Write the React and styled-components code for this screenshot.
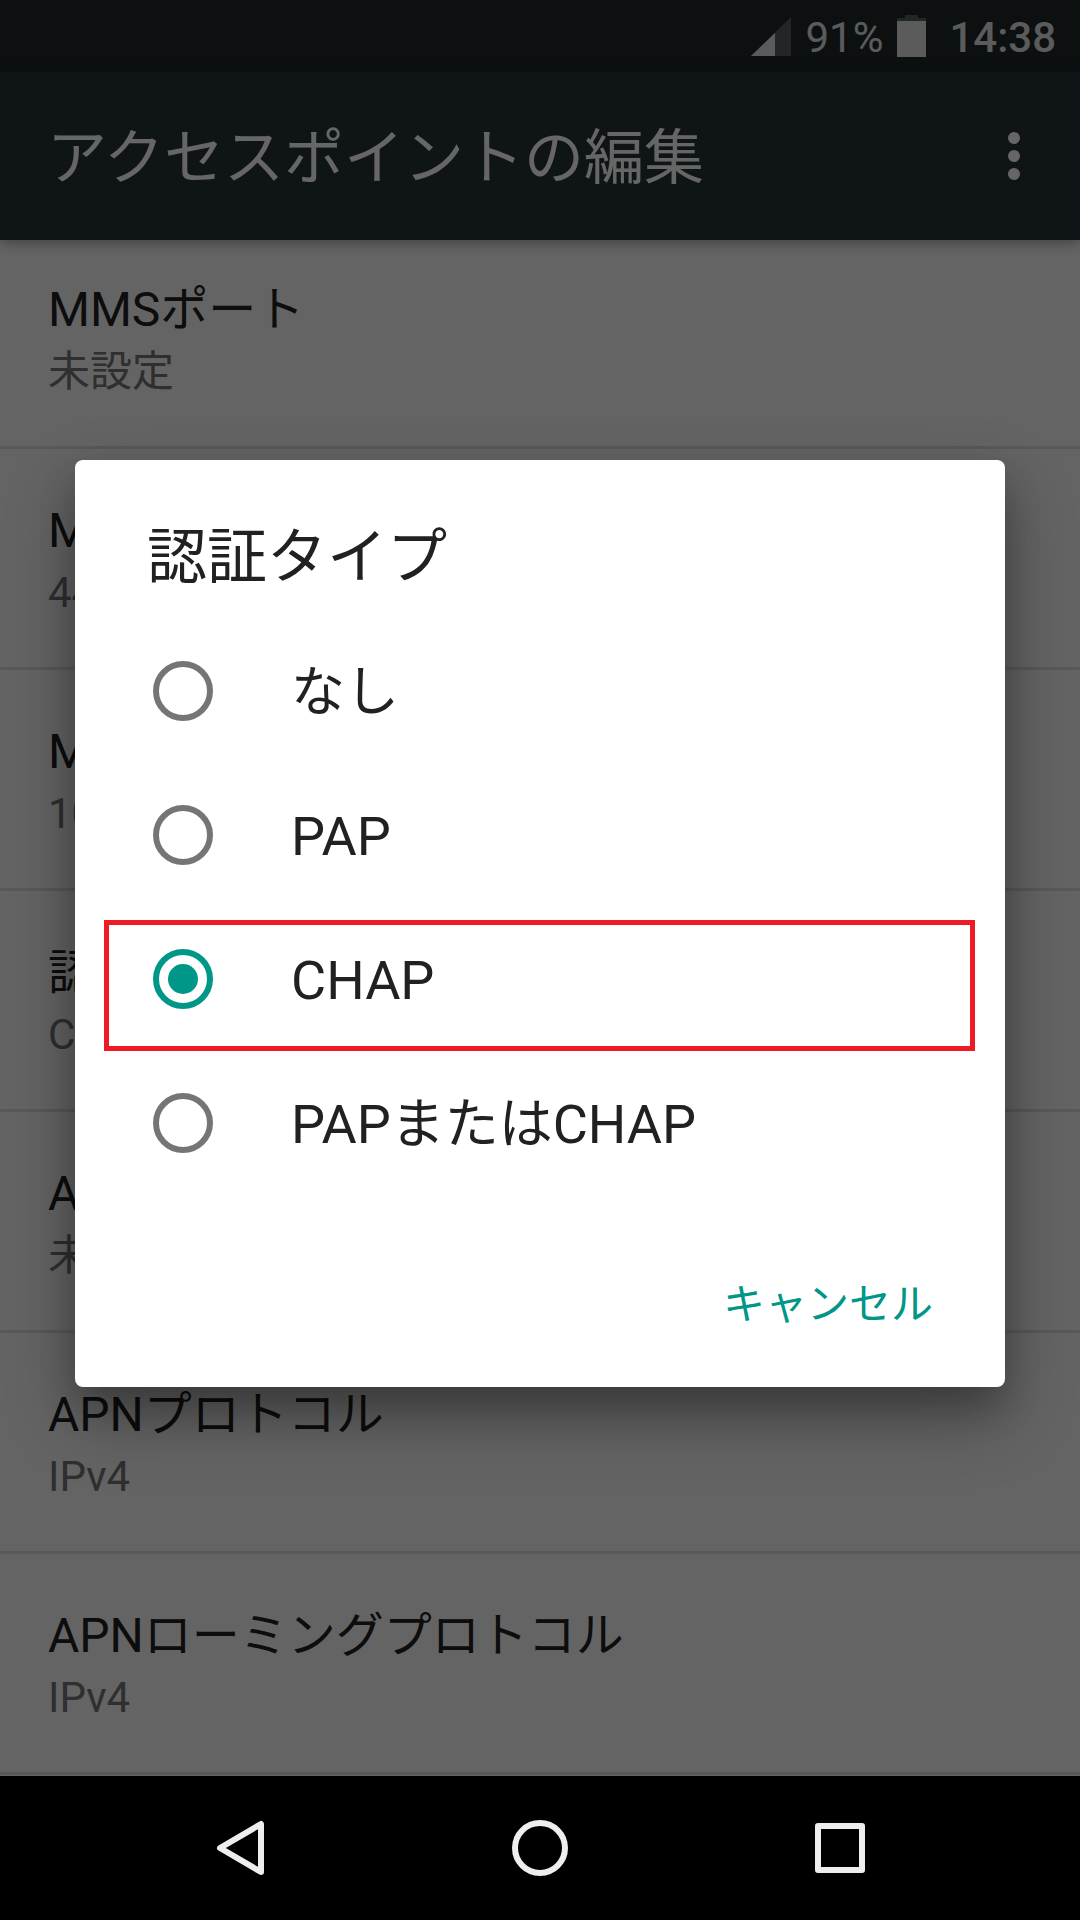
import styled, { createGlobalStyle } from 'styled-components';

const GlobalStyle = createGlobalStyle`
  html, body {
    margin: 0;
    padding: 0;
    background: #000;
  }
  * {
    box-sizing: border-box;
  }
`;

const Screen = styled.div`
  width: 1080px;
  height: 1920px;
  display: flex;
  flex-direction: column;
  overflow: hidden;
  font-family: Roboto, "Noto Sans CJK JP", sans-serif;
`;

const Main = styled.div`
  position: relative;
  height: 1776px;
  display: flex;
  flex-direction: column;
  background: #fafafa;
  overflow: hidden;
`;

const StatusBar = styled.div`
  height: 72px;
  flex: none;
  display: flex;
  align-items: center;
  justify-content: flex-end;
  padding-right: 24px;
  background: #1e282c;
  color: #e4e4e4;
  font-size: 42px;
  line-height: 72px;
`;

const Percent = styled.span`
  margin-left: 14px;
  padding-top: 4px;
`;

const Clock = styled.span`
  margin-left: 23px;
  padding-top: 4px;
  font-weight: 500;
`;

const BatteryIcon = styled.svg`
  margin-left: 14px;
`;

const Toolbar = styled.div`
  height: 168px;
  flex: none;
  display: flex;
  align-items: center;
  justify-content: space-between;
  padding: 0 60px 0 47px;
  background: #263238;
  color: #fff;
  font-size: 60px;
  position: relative;
  z-index: 1;
  box-shadow: 0 4px 12px rgba(0, 0, 0, 0.3);
`;

const ToolbarTitle = styled.span`
  padding-bottom: 7px;
`;

const Dots = styled.svg`
  display: block;
`;

const List = styled.div`
  flex: 1;
  overflow: hidden;
`;

const Rows = styled.div`
  margin-top: -12px;
`;

const Row = styled.div`
  height: 221px;
  padding: 49px 48px 0;
  border-bottom: 3px solid #dedede;
`;

const RowTitle = styled.div`
  font-size: 48px;
  line-height: 66px;
  color: #212121;
`;

const RowValue = styled.div`
  font-size: 42px;
  line-height: 58px;
  color: #757575;
`;

const Overlay = styled.div`
  position: absolute;
  inset: 0;
  z-index: 2;
  padding-top: 71px;
  display: flex;
  align-items: center;
  justify-content: center;
  background: rgba(0, 0, 0, 0.6);
`;

const Dialog = styled.div`
  width: 930px;
  height: 927px;
  display: flex;
  flex-direction: column;
  background: #fff;
  border-radius: 8px;
  box-shadow: 0 30px 70px rgba(0, 0, 0, 0.3), 0 20px 36px rgba(0, 0, 0, 0.2);
`;

const DialogTitle = styled.div`
  padding: 58px 0 0 72px;
  height: 159px;
  font-size: 60px;
  line-height: 80px;
  color: #212121;
`;

const Options = styled.div`
  display: flex;
  flex-direction: column;
`;

const Option = styled.div`
  position: relative;
  height: 144px;
  display: flex;
  align-items: center;
  padding-left: 78px;
`;

const Radio = styled.span`
  width: 60px;
  height: 60px;
  flex: none;
  display: flex;
  align-items: center;
  justify-content: center;
  border-radius: 50%;
  border: 6px solid ${(p) => (p.$checked ? '#009688' : '#757575')};

  &::after {
    content: '';
    display: ${(p) => (p.$checked ? 'block' : 'none')};
    width: 30px;
    height: 30px;
    border-radius: 50%;
    background: #009688;
  }
`;

const OptionLabel = styled.span`
  margin-left: 78px;
  padding-top: 4px;
  font-size: 54px;
  line-height: 72px;
  color: #212121;
`;

// red marker the screenshot's author drew over the selected row
const Highlight = styled.div`
  position: absolute;
  left: 29px;
  right: 30px;
  top: 13px;
  height: 131px;
  border: 5px solid #ed1c24;
`;

const DialogActions = styled.div`
  margin-top: auto;
  display: flex;
  justify-content: flex-end;
  padding: 0 72px 53px 0;
`;

const CancelButton = styled.span`
  font-size: 42px;
  line-height: 58px;
  color: #009688;
`;

const NavBar = styled.div`
  height: 144px;
  flex: none;
  display: flex;
  align-items: center;
  justify-content: center;
  gap: 240px;
  background: #000;
`;

const NavIcon = styled.svg`
  display: block;
`;

const options = ['なし', 'PAP', 'CHAP', 'PAPまたはCHAP'];

const rows = [
  ['MMSポート', '未設定'],
  ['MCC', '440'],
  ['MNC', '10'],
  ['認証タイプ', 'CHAP'],
  ['APNタイプ', '未設定'],
  ['APNプロトコル', 'IPv4'],
  ['APNローミングプロトコル', 'IPv4'],
];

const App = () => (
  <>
    <GlobalStyle />
    <Screen>
      <Main>
        <StatusBar>
          <svg width="40" height="39" viewBox="0 0 40 39" fill="#e4e4e4">
            <path d="M40 0V39H0Z" opacity="0.3" />
            <path d="M24 16V39H0Z" />
          </svg>
          <Percent>91%</Percent>
          <BatteryIcon width="29" height="42" viewBox="0 0 29 42" fill="#e4e4e4">
            <path d="M8 0H21V3H29V42H0V3H8Z" opacity="0.3" />
            <path d="M0 6H29V42H0Z" />
          </BatteryIcon>
          <Clock>14:38</Clock>
        </StatusBar>
        <Toolbar>
          <ToolbarTitle>アクセスポイントの編集</ToolbarTitle>
          <Dots width="12" height="48" viewBox="0 0 12 48" fill="#fff">
            <circle cx="6" cy="6" r="6" />
            <circle cx="6" cy="24" r="6" />
            <circle cx="6" cy="42" r="6" />
          </Dots>
        </Toolbar>
        <List>
          <Rows>
            {rows.map(([title, value]) => (
              <Row key={title}>
                <RowTitle>{title}</RowTitle>
                <RowValue>{value}</RowValue>
              </Row>
            ))}
          </Rows>
        </List>
        <Overlay>
          <Dialog>
            <DialogTitle>認証タイプ</DialogTitle>
            <Options>
              {options.map((label) => (
                <Option key={label}>
                  <Radio $checked={label === 'CHAP'} />
                  <OptionLabel>{label}</OptionLabel>
                  {label === 'CHAP' && <Highlight />}
                </Option>
              ))}
            </Options>
            <DialogActions>
              <CancelButton>キャンセル</CancelButton>
            </DialogActions>
          </Dialog>
        </Overlay>
      </Main>
      <NavBar>
        <NavIcon width="60" height="60" viewBox="0 0 60 60" fill="none" stroke="#eee" strokeWidth="6" strokeLinejoin="round">
          <path d="M51 6V54L10 30Z" />
        </NavIcon>
        <NavIcon width="60" height="60" viewBox="0 0 60 60" fill="none" stroke="#eee" strokeWidth="6">
          <circle cx="30" cy="30" r="25" />
        </NavIcon>
        <NavIcon width="60" height="60" viewBox="0 0 60 60" fill="none" stroke="#eee" strokeWidth="6" strokeLinejoin="round">
          <rect x="8" y="8" width="44" height="44" />
        </NavIcon>
      </NavBar>
    </Screen>
  </>
);

export default App;
